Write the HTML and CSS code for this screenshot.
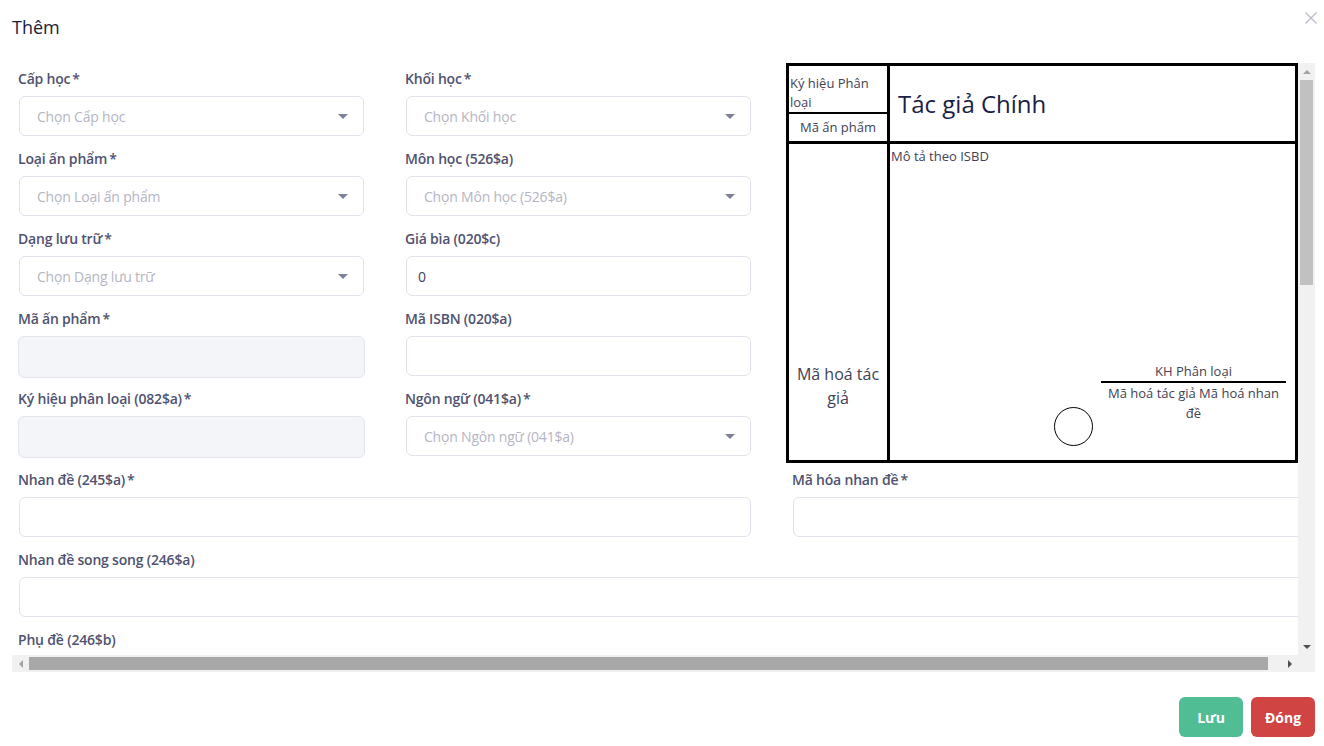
FILE: index.html
```html
<!DOCTYPE html>
<html lang="vi">
<head>
<meta charset="utf-8">
<title>Thêm</title>
<link rel="stylesheet" href="styles.css">
</head>
<body>
<div class="modal">
  <header class="modal-header">
    <h2 class="modal-title">Thêm</h2>
    <button class="close-btn" aria-label="Đóng">
      <svg width="12" height="12" viewBox="0 0 12 12"><path d="M0.5 0.5L11.5 11.5M11.5 0.5L0.5 11.5" stroke="#b9bace" stroke-width="1.3" fill="none"/></svg>
    </button>
  </header>

  <div class="scroll-frame">
    <div class="viewport">
      <div class="content">
        <div class="top-row">
          <div class="fields">
            <div class="field">
              <label class="lbl">Cấp học<span class="req">*</span></label>
              <div class="select"><span class="ph">Chọn Cấp học</span><span class="caret"></span></div>
            </div>
            <div class="field">
              <label class="lbl">Khối học<span class="req">*</span></label>
              <div class="select"><span class="ph">Chọn Khối học</span><span class="caret"></span></div>
            </div>
            <div class="field">
              <label class="lbl">Loại ấn phẩm<span class="req">*</span></label>
              <div class="select"><span class="ph">Chọn Loại ấn phẩm</span><span class="caret"></span></div>
            </div>
            <div class="field">
              <label class="lbl">Môn học (526$a)</label>
              <div class="select"><span class="ph">Chọn Môn học (526$a)</span><span class="caret"></span></div>
            </div>
            <div class="field">
              <label class="lbl">Dạng lưu trữ<span class="req">*</span></label>
              <div class="select"><span class="ph">Chọn Dạng lưu trữ</span><span class="caret"></span></div>
            </div>
            <div class="field">
              <label class="lbl">Giá bìa (020$c)</label>
              <div class="input"><span class="val">0</span></div>
            </div>
            <div class="field">
              <label class="lbl">Mã ấn phẩm<span class="req">*</span></label>
              <div class="input disabled"></div>
            </div>
            <div class="field">
              <label class="lbl">Mã ISBN (020$a)</label>
              <div class="input"></div>
            </div>
            <div class="field">
              <label class="lbl">Ký hiệu phân loại (082$a)<span class="req">*</span></label>
              <div class="input disabled"></div>
            </div>
            <div class="field">
              <label class="lbl">Ngôn ngữ (041$a)<span class="req">*</span></label>
              <div class="select"><span class="ph">Chọn Ngôn ngữ (041$a)</span><span class="caret"></span></div>
            </div>
          </div>

          <div class="card">
            <div class="cell head-left">
              <div class="kh">Ký hiệu Phân loại</div>
              <div class="ma">Mã ấn phẩm</div>
            </div>
            <div class="cell head-right">Tác giả Chính</div>
            <div class="cell body-left">Mã hoá tác giả</div>
            <div class="cell body-right">
              <div class="isbd">Mô tả theo ISBD</div>
              <div class="circle"></div>
              <div class="class-block">
                <div class="kh-pl">KH Phân loại</div>
                <div class="codes">Mã hoá tác giả Mã hoá nhan đề</div>
              </div>
            </div>
          </div>
        </div>

        <div class="row-2">
          <div class="field">
            <label class="lbl">Nhan đề (245$a)<span class="req">*</span></label>
            <div class="input"></div>
          </div>
          <div class="field">
            <label class="lbl">Mã hóa nhan đề<span class="req">*</span></label>
            <div class="input"></div>
          </div>
        </div>

        <div class="field full">
          <label class="lbl">Nhan đề song song (246$a)</label>
          <div class="input"></div>
        </div>
        <div class="field full">
          <label class="lbl">Phụ đề (246$b)</label>
          <div class="input"></div>
        </div>
      </div>
    </div>

    <div class="vbar">
      <span class="arrow up light"></span>
      <div class="vtrack"><div class="vthumb"></div></div>
      <span class="arrow down"></span>
    </div>
    <div class="hbar">
      <span class="arrow left light"></span>
      <div class="htrack"><div class="hthumb"></div></div>
      <span class="arrow right"></span>
    </div>
    <div class="corner"></div>
  </div>

  <footer class="modal-footer">
    <button class="btn btn-save">Lưu</button>
    <button class="btn btn-close">Đóng</button>
  </footer>
</div>
</body>
</html>
```

FILE: styles.css
```css
* { box-sizing: border-box; }

html, body {
  margin: 0;
  padding: 0;
  background: #ffffff;
}

body {
  font-family: "Open Sans", "Noto Sans", "Liberation Sans", sans-serif;
  color: #3f4254;
  width: 1324px;
  height: 746px;
  overflow: hidden;
}

.modal {
  width: 1324px;
  padding: 0 9px 0 12px;
}

.modal-header {
  display: flex;
  justify-content: space-between;
  align-items: flex-start;
  height: 63px;
}

.modal-title {
  margin: 16px 0 0;
  font-size: 18px;
  line-height: 22px;
  font-weight: 500;
  color: #181b3a;
}

.close-btn {
  margin: 12px -2px 0 0;
  padding: 0;
  border: 0;
  background: none;
  width: 12px;
  height: 12px;
  display: flex;
}

/* scroll frame */
.scroll-frame {
  width: 1303px;
  height: 609px;
  display: grid;
  grid-template-columns: 1286px 17px;
  grid-template-rows: 592px 17px;
}

.viewport {
  overflow: hidden;
  position: relative;
}

.content {
  width: 1302px;
  padding: 5px 9px 0 7px;
}

.top-row {
  display: grid;
  grid-template-columns: 732px 512px;
  column-gap: 42px;
  align-items: start;
  margin-bottom: 6px;
}

.fields {
  display: grid;
  grid-template-columns: 345px 345px;
  column-gap: 42px;
  row-gap: 12px;
}

.field {
  display: flex;
  flex-direction: column;
}

.field.full {
  margin-bottom: 12px;
}

.lbl {
  font-size: 14px;
  line-height: 20px;
  padding-top: 1px;
  font-weight: 600;
  color: #4f5270;
  margin: 0 0 7px -1px;
  letter-spacing: -0.2px;
}

.req {
  margin-left: 2px;
}

.select, .input {
  height: 40px;
  border: 1px solid #e1e2ee;
  border-radius: 6px;
  background: #fff;
  display: flex;
  align-items: center;
  font-size: 14px;
}

.select {
  padding: 0 15px 0 17px;
  justify-content: space-between;
}

.input {
  padding: 0 11px;
}

.input.disabled {
  background: #f3f5f9;
  border-color: #e4e6ef;
  margin-left: -1px;
  margin-right: -1px;
  height: 42px;
  margin-bottom: -2px;
}

.ph {
  color: #b5b5c3;
  letter-spacing: -0.2px;
}

.val {
  color: #3f4254;
}

.caret {
  width: 0;
  height: 0;
  border-left: 5px solid transparent;
  border-right: 5px solid transparent;
  border-top: 5px solid #7e8299;
}

.row-2 {
  display: grid;
  grid-template-columns: 732px 512px;
  column-gap: 42px;
  margin-bottom: 12px;
}

/* catalog card */
.card {
  margin: -5px 0 0 -7px;
  width: 512px;
  height: 400px;
  border: 3px solid #000;
  display: grid;
  grid-template-columns: 98px 1fr;
  grid-template-rows: 78px 1fr;
  font-family: "Open Sans", "Noto Sans", sans-serif;
  color: #3f4254;
}

.cell {
  min-width: 0;
}

.head-left {
  border-right: 3px solid #000;
  border-bottom: 3px solid #000;
  display: flex;
  flex-direction: column;
  width: 101px;
}

.kh {
  font-size: 13px;
  line-height: 19px;
  padding: 8px 0 0 1px;
  border-bottom: 2px solid #000;
}

.ma {
  flex: 1;
  display: flex;
  align-items: center;
  justify-content: center;
  font-size: 13px;
  padding-bottom: 2px;
}

.head-right {
  border-bottom: 3px solid #000;
  display: flex;
  align-items: center;
  padding: 0 0 0 11px;
  font-size: 24px;
  color: #1b1e46;
}

.body-left {
  border-right: 3px solid #000;
  width: 101px;
  text-align: center;
  font-size: 16px;
  line-height: 24px;
  padding: 218px 4px 0 4px;
}

.body-right {
  position: relative;
  padding: 3px 0 0 4px;
}

.isbd {
  font-size: 13px;
  line-height: 19px;
}

.circle {
  position: absolute;
  left: 167px;
  top: 263px;
  width: 39px;
  height: 39px;
  border: 1px solid #000;
  border-radius: 50%;
}

.class-block {
  position: absolute;
  right: 9px;
  top: 217px;
  width: 185px;
  text-align: center;
  font-size: 13px;
  line-height: 20px;
}

.kh-pl {
  border-bottom: 2px solid #000;
}

/* fake scrollbars */
.vbar {
  background: #f1f1f1;
  display: flex;
  flex-direction: column;
  align-items: center;
}

.vtrack {
  flex: 1;
  width: 100%;
  display: flex;
  justify-content: center;
}

.vthumb {
  width: 13px;
  height: 205px;
  background: #c1c1c1;
}

.hbar {
  background: #f1f1f1;
  display: flex;
  align-items: center;
}

.htrack {
  flex: 1;
  height: 100%;
  display: flex;
  align-items: center;
}

.hthumb {
  height: 13px;
  width: 1239px;
  background: #a8a8a8;
}

.corner {
  background: #f1f1f1;
}

.arrow {
  width: 17px;
  height: 17px;
  flex: none;
  display: flex;
  align-items: center;
  justify-content: center;
}

.arrow::after {
  content: "";
  width: 0;
  height: 0;
}

.arrow.up::after {
  border-left: 4px solid transparent;
  border-right: 4px solid transparent;
  border-bottom: 4px solid #a3a3a3;
}

.arrow.down::after {
  border-left: 4px solid transparent;
  border-right: 4px solid transparent;
  border-top: 4px solid #505050;
}

.arrow.left::after {
  border-top: 4px solid transparent;
  border-bottom: 4px solid transparent;
  border-right: 4px solid #a3a3a3;
}

.arrow.right::after {
  border-top: 4px solid transparent;
  border-bottom: 4px solid transparent;
  border-left: 4px solid #505050;
}

/* footer */
.modal-footer {
  display: flex;
  justify-content: flex-end;
  gap: 8px;
  padding-top: 25px;
  width: 1303px;
}

.btn {
  width: 64px;
  height: 40px;
  border: 0;
  border-radius: 6px;
  color: #fff;
  font-family: "Open Sans", "Noto Sans", sans-serif;
  font-size: 14px;
  font-weight: 700;
  padding: 0;
}

.btn-save { background: #50bd95; }
.btn-close { background: #d14444; }
```
